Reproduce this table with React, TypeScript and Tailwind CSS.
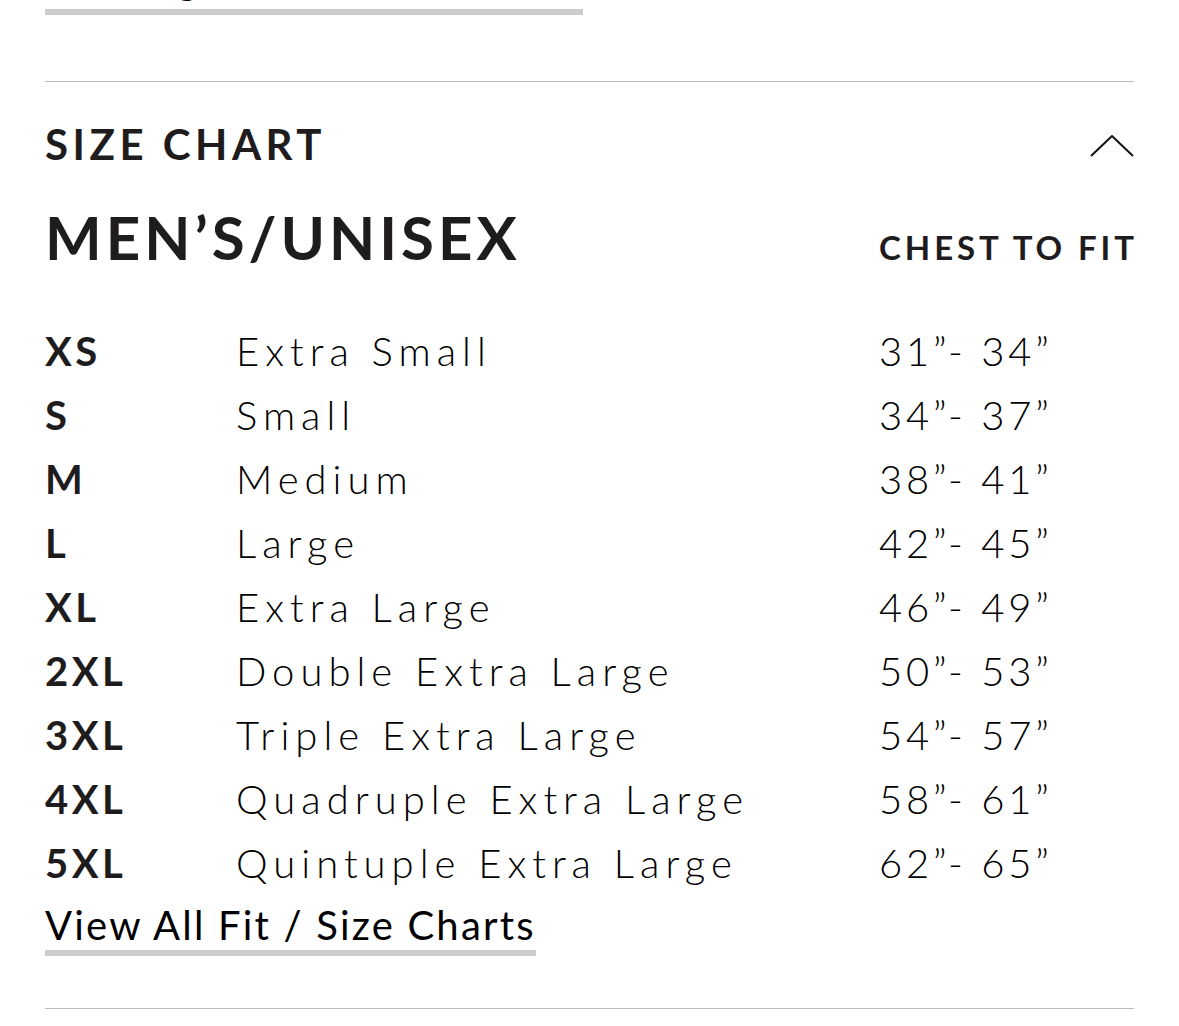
const rows = [
  { code: "XS", name: "Extra Small", chest: "31”- 34”" },
  { code: "S", name: "Small", chest: "34”- 37”" },
  { code: "M", name: "Medium", chest: "38”- 41”" },
  { code: "L", name: "Large", chest: "42”- 45”" },
  { code: "XL", name: "Extra Large", chest: "46”- 49”" },
  { code: "2XL", name: "Double Extra Large", chest: "50”- 53”" },
  { code: "3XL", name: "Triple Extra Large", chest: "54”- 57”" },
  { code: "4XL", name: "Quadruple Extra Large", chest: "58”- 61”" },
  { code: "5XL", name: "Quintuple Extra Large", chest: "62”- 65”" },
];

function UnderlineLink({ children, className = "" }: { children: string; className?: string }) {
  return (
    <a href="#" className={`inline-block border-b-[6px] border-[#cccccc] text-[40px] leading-[50px] tracking-[2.2px] text-black ${className}`}>
      {children}
    </a>
  );
}

export default function App() {
  return (
    <div className="min-h-[1026px] overflow-hidden bg-white px-[45px] font-['Lato','Open_Sans',sans-serif] text-[#1f1c1d]">
      <div className="-mt-[46px]">
        <UnderlineLink className="pb-[5px] tracking-[1.9px]">Printing Method & Material</UnderlineLink>
      </div>

      <section className="mt-[66px] border-y border-[#bdbdbd] pb-[52px]">
        <div className="flex items-center justify-between pt-[38px]">
          <h2 className="text-[42px] font-bold leading-[48px] tracking-[4.5px]">SIZE CHART</h2>
          <svg className="mt-[4px]" width="44" height="22" viewBox="0 0 44 22" fill="none" stroke="#111" strokeWidth="2">
            <path d="M1 21 L22 1 L43 21" />
          </svg>
        </div>

        <div className="mt-[37px] flex items-baseline justify-between">
          <h3 className="text-[60px] font-bold leading-[64px] tracking-[4px]">MEN’S/UNISEX</h3>
          <span className="-mr-[4px] text-[33px] font-bold tracking-[3.9px]">CHEST TO FIT</span>
        </div>

        <div className="mt-[46px] grid grid-cols-[191px_643px_1fr] text-[40px] leading-[64px]">
          {rows.map((r) => (
            <div key={r.code} className="contents">
              <span className="font-bold tracking-[3.5px]">{r.code}</span>
              <span className="font-light tracking-[6px] text-black">{r.name}</span>
              <span className="font-light tracking-[3.8px] text-black">{r.chest}</span>
            </div>
          ))}
        </div>

        <div className="mt-[5px]">
          <UnderlineLink>View All Fit / Size Charts</UnderlineLink>
        </div>
      </section>
    </div>
  );
}
